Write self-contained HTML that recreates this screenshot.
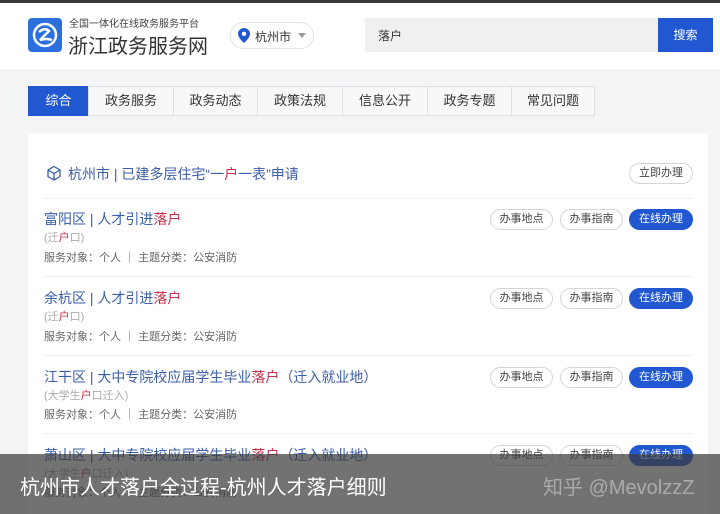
<!DOCTYPE html>
<html><head><meta charset="utf-8"><style>
*{margin:0;padding:0;box-sizing:border-box}
html,body{width:720px;height:514px;overflow:hidden}
body{background:#f3f4f6;font-family:"Liberation Sans","Noto Sans CJK SC",sans-serif;position:relative}
.a{position:absolute;white-space:nowrap}
.tab{top:86px;height:30px;border:1px solid #dcdfe3;background:#f7f8fa;color:#333;font-size:13px;line-height:28px;text-align:center}
.card{left:28px;top:133px;width:680px;height:381px;background:#fff}
.t{font-size:14px;color:#3a5ea8}
.r{color:#c8304a}
.s{font-size:11px;color:#aaa}
.m{font-size:11px;color:#666}
.btn{height:21px;border:1px solid #d5d5d5;border-radius:11px;font-size:11px;color:#444;text-align:center;line-height:19px;background:#fff}
.bb{background:#2157d1;color:#fff;border-color:#2157d1}
.sep{left:44px;width:648px;height:1px;background:#eee}
</style></head><body>
<div class="a" style="left:0;top:0;width:720px;height:3px;background:#3a3a3a"></div>
<div class="a" style="left:0;top:3px;width:720px;height:66px;background:#fff"></div>
<div class="a" style="left:28px;top:18px;width:34px;height:34px;background:#2a6fdc;border-radius:4px"></div>
<svg class="a" style="left:28px;top:18px" width="34" height="34" viewBox="0 0 34 34"><circle cx="17" cy="17" r="11" fill="none" stroke="#fff" stroke-width="2.5"/><path d="M11 14 Q17 9 21 13 Q16 18 12 22 Q18 20 24 22" fill="none" stroke="#fff" stroke-width="2.5"/></svg>
<div class="a" style="left:69px;top:15px;font-size:10px;color:#444">全国一体化在线政务服务平台</div>
<div class="a" style="left:68px;top:30px;font-size:20px;color:#333">浙江政务服务网</div>
<div class="a" style="left:230px;top:22px;width:84px;height:27px;border:1px solid #e3e3e3;border-radius:14px"></div>
<svg class="a" style="left:238px;top:28px" width="12" height="15" viewBox="0 0 12 15"><path d="M6 0C2.7 0 0 2.6 0 5.8 0 10 6 15 6 15S12 10 12 5.8C12 2.6 9.3 0 6 0z" fill="#2157d1"/><circle cx="6" cy="5.8" r="2.2" fill="#fff"/></svg>
<div class="a" style="left:255px;top:28px;font-size:12px;color:#333">杭州市</div>
<div class="a" style="left:298px;top:33px;width:0;height:0;border-left:4px solid transparent;border-right:4px solid transparent;border-top:5px solid #999"></div>
<div class="a" style="left:365px;top:18px;width:293px;height:34px;background:#f0f0f0"></div>
<div class="a" style="left:378px;top:27px;font-size:12px;color:#333">落户</div>
<div class="a" style="left:658px;top:18px;width:55px;height:34px;background:#2157d1;color:#fff;font-size:12px;line-height:34px;text-align:center">搜索</div>
<div class="a tab" style="left:28px;width:61px;background:#2157d1;color:#fff;border-color:#2157d1">综合</div>
<div class="a tab" style="left:88px;width:86px">政务服务</div>
<div class="a tab" style="left:173px;width:85px">政务动态</div>
<div class="a tab" style="left:257px;width:86px">政策法规</div>
<div class="a tab" style="left:342px;width:86px">信息公开</div>
<div class="a tab" style="left:427px;width:85px">政务专题</div>
<div class="a tab" style="left:511px;width:84px">常见问题</div>
<div class="a card"></div>
<svg class="a" style="left:46px;top:165px" width="16" height="16" viewBox="0 0 16 16"><path d="M8 1.5 14 5v6.5L8 15 2 11.5V5z M2 5l6 3.5L14 5 M8 8.5V15" fill="none" stroke="#3a5ea8" stroke-width="1.3"/></svg>
<div class="a t" style="left:68px;top:164px">杭州市 | 已建多层住宅“一<span class="r">户</span>一表”申请</div>
<div class="a btn" style="left:629px;top:163px;width:64px">立即办理</div>
<div class="a sep" style="top:198px"></div>

<div class="a t" style="left:44px;top:209px">富阳区 | 人才引进<span class="r">落户</span></div>
<div class="a s" style="left:44px;top:229px">(迁<span class="r">户</span>口)</div>
<div class="a m" style="left:44px;top:249px">服务对象：个人 ｜ 主题分类：公安消防</div>
<div class="a btn" style="left:490px;top:209px;width:63px">办事地点</div>
<div class="a btn" style="left:560px;top:209px;width:63px">办事指南</div>
<div class="a btn bb" style="left:629px;top:209px;width:64px">在线办理</div>
<div class="a sep" style="top:276px"></div>

<div class="a t" style="left:44px;top:288px">余杭区 | 人才引进<span class="r">落户</span></div>
<div class="a s" style="left:44px;top:308px">(迁<span class="r">户</span>口)</div>
<div class="a m" style="left:44px;top:328px">服务对象：个人 ｜ 主题分类：公安消防</div>
<div class="a btn" style="left:490px;top:288px;width:63px">办事地点</div>
<div class="a btn" style="left:560px;top:288px;width:63px">办事指南</div>
<div class="a btn bb" style="left:629px;top:288px;width:64px">在线办理</div>
<div class="a sep" style="top:355px"></div>

<div class="a t" style="left:44px;top:367px">江干区 | 大中专院校应届学生毕业<span class="r">落户</span>（迁入就业地）</div>
<div class="a s" style="left:44px;top:387px">(大学生<span class="r">户</span>口迁入)</div>
<div class="a m" style="left:44px;top:406px">服务对象：个人 ｜ 主题分类：公安消防</div>
<div class="a btn" style="left:490px;top:367px;width:63px">办事地点</div>
<div class="a btn" style="left:560px;top:367px;width:63px">办事指南</div>
<div class="a btn bb" style="left:629px;top:367px;width:64px">在线办理</div>
<div class="a sep" style="top:433px"></div>

<div class="a t" style="left:44px;top:445px">萧山区 | 大中专院校应届学生毕业<span class="r">落户</span>（迁入就业地）</div>
<div class="a s" style="left:44px;top:465px">(大学生<span class="r">户</span>口迁入)</div>
<div class="a m" style="left:44px;top:484px">服务对象：个人 ｜ 主题分类：公安消防</div>
<div class="a btn" style="left:490px;top:445px;width:63px">办事地点</div>
<div class="a btn" style="left:560px;top:445px;width:63px">办事指南</div>
<div class="a btn bb" style="left:629px;top:445px;width:64px">在线办理</div>

<div class="a" style="left:0;top:454px;width:720px;height:60px;background:rgba(60,60,60,0.72)"></div>
<div class="a" style="left:20px;top:471px;font-size:20px;color:#fff">杭州市人才落户全过程-杭州人才落户细则</div>
<div class="a" style="left:543px;top:471px;font-size:20px;color:rgba(255,255,255,0.4)">知乎 @MevolzzZ</div>
</body></html>
